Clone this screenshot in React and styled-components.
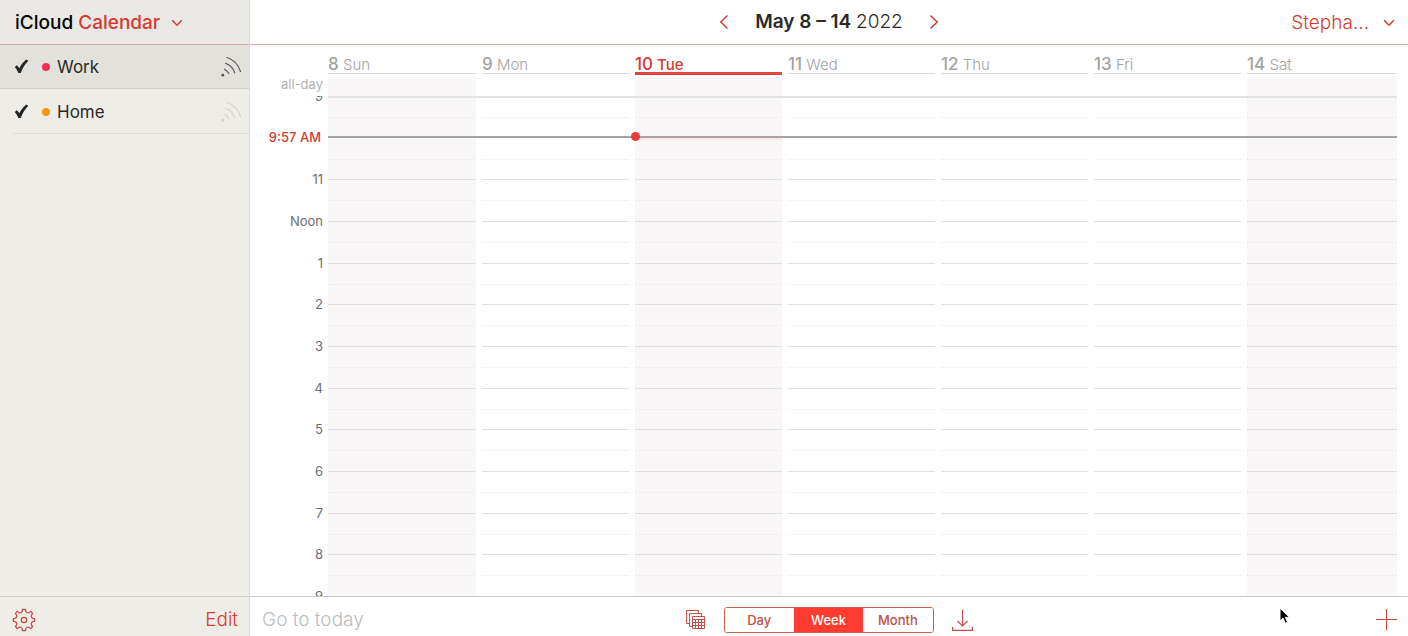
import React, { useState } from "react";
import styled, { createGlobalStyle } from "styled-components";

const RED = "#d63a31";

const GlobalStyle = createGlobalStyle`
  * { box-sizing: border-box; }
  html, body { margin: 0; }
  body, button, input { font-family: Inter, "Liberation Sans", sans-serif; }
`;

const Shell = styled.div`
  position: relative;
  display: grid;
  grid-template-columns: 250px minmax(0, 1fr);
  height: 100vh;
  min-height: 480px;
  overflow: hidden;
  background: #fff;
  color: #2a2a2a;
`;

const Sidebar = styled.aside`
  display: flex;
  flex-direction: column;
  background: #efede8;
  border-right: 1px solid #dcdad7;
`;

const SidebarHeader = styled.header`
  height: 45px;
  padding: 2px 0 0 15px;
  display: flex;
  align-items: center;
  background: #eae8e4;
  border-bottom: 1px solid #dca8a5;
`;

const PlainButton = styled.button`
  border: 0;
  padding: 0;
  margin: 0;
  background: none;
  color: ${RED};
  display: flex;
  align-items: center;
  cursor: pointer;
`;

const AppSwitcher = styled(PlainButton)`
  gap: 11px;
  font-size: 19px;
  line-height: 24px;
  font-weight: 500;
`;

const Black = styled.span`
  color: #000;
`;

const CalendarList = styled.ul`
  list-style: none;
  margin: 0;
  padding: 0;
  flex: 1;
`;

const CalendarItem = styled.li`
  display: flex;
  align-items: center;
  height: ${(p) => (p.$selected ? 44 : 45)}px;
  margin-left: ${(p) => (p.$selected ? 0 : 13)}px;
  padding-top: 1px;
  padding-left: ${(p) => (p.$selected ? 14 : 1)}px;
  padding-right: 7px;
  background: ${(p) => (p.$selected ? "#e3e1dc" : "transparent")};
  border-bottom: 1px solid ${(p) => (p.$selected ? "#cfcdc9" : "#dddbd7")};
`;

const CalendarLabel = styled.label`
  flex: 1;
  display: flex;
  align-items: center;
  font-size: 17px;
  line-height: 22px;
`;

const CheckWrap = styled.span`
  position: relative;
  display: block;
  width: 16px;
  height: 16px;
  margin-right: 12px;
  svg {
    position: absolute;
    inset: 0;
    pointer-events: none;
  }
  input:not(:checked) + svg {
    visibility: hidden;
  }
`;

const Check = styled.input`
  appearance: none;
  display: block;
  width: 16px;
  height: 16px;
  margin: 0;
`;

const Dot = styled.span`
  width: 8px;
  height: 8px;
  margin-right: 7px;
  border-radius: 50%;
  background: ${(p) => p.$color};
`;

const ShareButton = styled(PlainButton)`
  color: ${(p) => (p.$active ? "#555" : "#d2d0cc")};
`;

const SidebarFooter = styled.footer`
  height: 40px;
  padding: 6px 11px 0 12px;
  display: flex;
  align-items: center;
  justify-content: space-between;
  border-top: 1px solid #cdcccb;
`;

const TextButton = styled(PlainButton)`
  font-size: 19px;
  line-height: 24px;
  font-weight: 300;
  color: ${(p) => (p.$muted ? "#bcbcbc" : RED)};
`;

const Main = styled.main`
  display: flex;
  flex-direction: column;
  min-width: 0;
`;

const TopBar = styled.header`
  height: 45px;
  padding: 0 13px;
  display: grid;
  grid-template-columns: 1fr auto 1fr;
  align-items: center;
  border-bottom: 1px solid #dca8a5;
`;

const DateNav = styled.nav`
  grid-column: 2;
  display: flex;
  align-items: center;
  gap: 26px;
`;

const DateTitle = styled.h1`
  margin: 0;
  font-size: 19px;
  line-height: 24px;
  font-weight: 600;
`;

const Year = styled.span`
  font-weight: 300;
`;

const Account = styled(PlainButton)`
  justify-self: end;
  gap: 14px;
  padding-top: 2px;
  font-size: 19px;
  line-height: 24px;
  font-weight: 300;
`;

const Week = styled.section`
  flex: 1;
  min-height: 0;
  padding-right: 11px;
  display: flex;
  flex-direction: column;
`;

const Band = styled.div`
  display: grid;
  grid-template-columns: 78px minmax(0, 1fr);
`;

const DayColumns = styled.div`
  display: grid;
  grid-template-columns: minmax(0, 148fr) repeat(5, minmax(0, 147fr)) minmax(0, 150fr);
  column-gap: 6px;
`;

const DayHeads = styled(DayColumns)`
  grid-column: 2;
  height: 32px;
  align-items: start;
`;

const DayHead = styled.h2`
  margin: 0;
  height: ${(p) => (p.$today ? 30 : 29)}px;
  padding-top: 8px;
  font-size: 15px;
  line-height: 22px;
  font-weight: ${(p) => (p.$today ? 500 : 300)};
  white-space: nowrap;
  color: ${(p) => (p.$today ? RED : "#a3a3a3")};
  border-bottom: ${(p) => (p.$today ? "3px solid #e3443b" : "1px solid #d9d9d9")};
`;

const DayNumber = styled.span`
  font-size: 17px;
  font-weight: 500;
`;

const AllDayLabel = styled.span`
  padding-right: 5px;
  text-align: right;
  font-size: 13px;
  line-height: 14px;
  color: #b2b2b2;
`;

const AllDayCell = styled.div`
  height: 19px;
  background: ${(p) => (p.$shaded ? "#f8f6f7" : "transparent")};
`;

const Hours = styled.div`
  position: relative;
  flex: 1;
  min-height: 0;
  overflow: hidden;
  display: grid;
  grid-template-columns: 78px minmax(0, 1fr);
`;

const HourLabels = styled.div`
  display: grid;
  grid-template-rows: repeat(13, minmax(0, 1fr));
  height: calc(100% * 13 / 12);
  margin-top: -8px;
`;

const HourLabel = styled.span`
  padding-right: 5px;
  text-align: right;
  font-size: 13px;
  line-height: 16px;
  color: #6e6e6e;
`;

const DayColumn = styled.div`
  display: grid;
  grid-template-rows: repeat(24, minmax(0, 1fr));
  background: ${(p) => (p.$shaded ? "#f8f6f7" : "transparent")};
`;

const HalfHour = styled.div`
  border-top: 1px ${(p) => (p.$half ? "dotted #e8e8e8" : "solid #dfdfdf")};
  visibility: ${(p) => (p.$hidden ? "hidden" : "visible")};
`;

const AllDayRule = styled.div`
  position: absolute;
  top: 0;
  left: 78px;
  right: 0;
  height: 2px;
  background: #e4e3e4;
`;

const NowMarker = styled.div`
  position: absolute;
  left: 0;
  right: 0;
  height: 16px;
  margin-top: -7px;
  display: grid;
  grid-template-columns: 78px minmax(0, 1fr);
  align-items: center;
`;

const NowTime = styled.time`
  padding-right: 7px;
  text-align: right;
  font-size: 13px;
  line-height: 16px;
  font-weight: 500;
  color: ${RED};
`;

const NowLine = styled(DayColumns)`
  height: 2px;
  background: #a5a4a4;
`;

const NowToday = styled.span`
  grid-column: 3;
  position: relative;
  box-shadow: 0 2px 0 #fbe6e5;
  background: #a9a4a4;
  &::before {
    content: "";
    position: absolute;
    left: -4px;
    top: -4px;
    width: 9px;
    height: 9px;
    border-radius: 50%;
    background: #ee3a30;
  }
`;

const BottomBar = styled.footer`
  height: 40px;
  padding: 6px 11px 0 12px;
  display: grid;
  grid-template-columns: 1fr auto 1fr;
  align-items: center;
  border-top: 1px solid #cdcccb;
`;

const ViewTools = styled.div`
  display: flex;
  align-items: center;
  gap: 18px;
`;

const Segments = styled.div`
  display: grid;
  grid-template-columns: repeat(3, 1fr);
  width: 210px;
  height: 26px;
  overflow: hidden;
  border: 1px solid #cf6058;
  border-radius: 3px;
`;

const Segment = styled.button`
  border: 0;
  padding: 0;
  font-size: 13px;
  line-height: 24px;
  font-weight: 500;
  background: ${(p) => (p.$active ? "#fe3b2f" : "#fff")};
  color: ${(p) => (p.$active ? "#fff" : "#c4504a")};
`;

const AddButton = styled(PlainButton)`
  justify-self: end;
`;

const Pointer = styled.svg`
  position: absolute;
  right: 117px;
  bottom: 11px;
  pointer-events: none;
`;

const Chevron = ({ d, w, h }) => (
  <svg width={w} height={h} viewBox={`0 0 ${w} ${h}`} fill="none" stroke="currentColor" strokeWidth="1.5" aria-hidden="true">
    <path d={d} />
  </svg>
);

const DownChevron = () => <Chevron w={12} h={8} d="M1.2 1.2 6 6.2 10.8 1.2" />;

const CheckIcon = () => (
  <svg width="16" height="16" viewBox="0 0 16 16" fill="#262626" aria-hidden="true">
    <path d="M.8 8 2.800 6.200C4 7.200 4.800 8.300 5.300 9.300 7 6 9.300 3 12.200.6L14.300 1.800C11 5.200 8.600 9.200 6.700 14H4.400C3.400 11.700 2.300 9.700.8 8Z" />
  </svg>
);

const ShareIcon = () => (
  <svg width="22" height="22" viewBox="0 0 22 22" fill="none" stroke="currentColor" strokeWidth="1.200" strokeLinecap="round" aria-hidden="true">
    <circle cx="2.800" cy="19.200" r="1.400" fill="currentColor" stroke="none" />
    <path d="M4.500 13.200A10 10 0 0 1 8.800 17.500M5.500 7.300A15.500 15.500 0 0 1 14.700 16.700M7 1.500A21 21 0 0 1 20.500 15.500" />
  </svg>
);

const gearPath = (() => {
  const teeth = 8;
  const step = (2 * Math.PI) / teeth;
  const at = (a, r) => `${(12 + r * Math.cos(a)).toFixed(2)} ${(12 + r * Math.sin(a)).toFixed(2)}`;
  let d = "";
  for (let i = 0; i < teeth; i += 1) {
    const a = i * step - Math.PI / 2;
    d += `${i === 0 ? "M" : "L"}${at(a - 0.14, 10.8)}L${at(a + 0.14, 10.8)}L${at(a + 0.18, 9.3)}`;
    d += `C${at(a + 0.24, 7.8)} ${at(a + step - 0.24, 7.8)} ${at(a + step - 0.18, 9.3)}`;
  }
  return `${d}Z`;
})();

const GearIcon = () => (
  <svg width="24" height="24" viewBox="0 0 24 24" fill="none" stroke="#c9443c" strokeWidth="1.200" strokeLinejoin="round" aria-hidden="true">
    <path d={gearPath} />
    <circle cx="12" cy="12" r="2.700" />
  </svg>
);

const StackIcon = () => (
  <svg width="20" height="20" viewBox="0 0 20 20" fill="none" stroke="#c4504a" aria-hidden="true">
    <path d="M3 13.500H.5V.5H12.500V3M6 16.500H3.500V3.500H15.500V6" />
    <path d="M6.500 6.500H18.500V18.500H6.500ZM6.500 9.500H18.500M6.500 12.500H18.500M6.500 15.500H18.500M9.500 9.500V18.500M12.500 9.500V18.500M15.500 9.500V18.500" />
  </svg>
);

const DownloadIcon = () => (
  <svg width="22" height="22" viewBox="0 0 22 22" fill="none" stroke="#c4504a" strokeWidth="1.200" aria-hidden="true">
    <path d="M10.500.5V17M5.500 12 10.500 17 15.500 12M.6 18V21.400H20.400V18" />
  </svg>
);

const PlusIcon = () => (
  <svg width="21" height="21" viewBox="0 0 21 21" stroke="#c9443c" aria-hidden="true">
    <path d="M10.500 0V21M0 10.500H21" />
  </svg>
);

const DAYS = [
  { n: 8, name: "Sun", shaded: true },
  { n: 9, name: "Mon" },
  { n: 10, name: "Tue", shaded: true, today: true },
  { n: 11, name: "Wed" },
  { n: 12, name: "Thu" },
  { n: 13, name: "Fri" },
  { n: 14, name: "Sat", shaded: true },
];

const HOURS = ["9", "", "11", "Noon", "1", "2", "3", "4", "5", "6", "7", "8", "9"];
const NOW_FROM_START = 57 / 60;

const CALENDARS = [
  { name: "Work", color: "#ee2f55", selected: true },
  { name: "Home", color: "#f7960f" },
];

export default function App() {
  const [view, setView] = useState("Week");
  return (
    <Shell>
      <GlobalStyle />
      <Sidebar>
        <SidebarHeader>
          <AppSwitcher>
            <span><Black>iCloud</Black> Calendar</span>
            <DownChevron />
          </AppSwitcher>
        </SidebarHeader>
        <CalendarList>
          {CALENDARS.map((c) => (
            <CalendarItem key={c.name} $selected={c.selected}>
              <CalendarLabel>
                <CheckWrap>
                  <Check type="checkbox" defaultChecked />
                  <CheckIcon />
                </CheckWrap>
                <Dot $color={c.color} />
                {c.name}
              </CalendarLabel>
              <ShareButton $active={c.selected} aria-label={`Share ${c.name}`}>
                <ShareIcon />
              </ShareButton>
            </CalendarItem>
          ))}
        </CalendarList>
        <SidebarFooter>
          <PlainButton aria-label="Settings"><GearIcon /></PlainButton>
          <TextButton>Edit</TextButton>
        </SidebarFooter>
      </Sidebar>

      <Main>
        <TopBar>
          <DateNav>
            <PlainButton aria-label="Previous week">
              <Chevron w={10} h={16} d="M8.500 1.500 1.800 8 8.500 14.500" />
            </PlainButton>
            <DateTitle>May 8 – 14 <Year>2022</Year></DateTitle>
            <PlainButton aria-label="Next week">
              <Chevron w={10} h={16} d="M1.500 1.500 8.200 8 1.500 14.500" />
            </PlainButton>
          </DateNav>
          <Account>
            Stepha...
            <DownChevron />
          </Account>
        </TopBar>

        <Week>
          <Band>
            <DayHeads>
              {DAYS.map((d) => (
                <DayHead key={d.n} $today={d.today}>
                  <DayNumber>{d.n}</DayNumber> {d.name}
                </DayHead>
              ))}
            </DayHeads>
          </Band>
          <Band>
            <AllDayLabel>all-day</AllDayLabel>
            <DayColumns>
              {DAYS.map((d) => <AllDayCell key={d.n} $shaded={d.shaded} />)}
            </DayColumns>
          </Band>
          <Hours>
            <HourLabels>
              {HOURS.map((h, i) => <HourLabel key={i}>{h}</HourLabel>)}
            </HourLabels>
            <DayColumns>
              {DAYS.map((d) => (
                <DayColumn key={d.n} $shaded={d.shaded}>
                  {Array.from({ length: 24 }, (_, i) => (
                    <HalfHour key={i} $half={i % 2 === 1} $hidden={i === 0 || i === 2} />
                  ))}
                </DayColumn>
              ))}
            </DayColumns>
            <AllDayRule />
            <NowMarker style={{ top: `${(NOW_FROM_START / 12) * 100}%` }}>
              <NowTime>9:57 AM</NowTime>
              <NowLine><NowToday /></NowLine>
            </NowMarker>
          </Hours>
        </Week>

        <BottomBar>
          <TextButton $muted>Go to today</TextButton>
          <ViewTools>
            <PlainButton aria-label="Show calendars"><StackIcon /></PlainButton>
            <Segments>
              {["Day", "Week", "Month"].map((v) => (
                <Segment key={v} $active={v === view} aria-pressed={v === view} onClick={() => setView(v)}>{v}</Segment>
              ))}
            </Segments>
            <PlainButton aria-label="Inbox"><DownloadIcon /></PlainButton>
          </ViewTools>
          <AddButton aria-label="New event"><PlusIcon /></AddButton>
        </BottomBar>
      </Main>

      <Pointer width="12" height="18" viewBox="0 0 12 18" fill="#000" stroke="#fff" strokeWidth="1" aria-hidden="true">
        <path d="M1 1V14L4 11.200 6.200 16.200 8.600 15.200 6.400 10.300H10.500Z" />
      </Pointer>
    </Shell>
  );
}
